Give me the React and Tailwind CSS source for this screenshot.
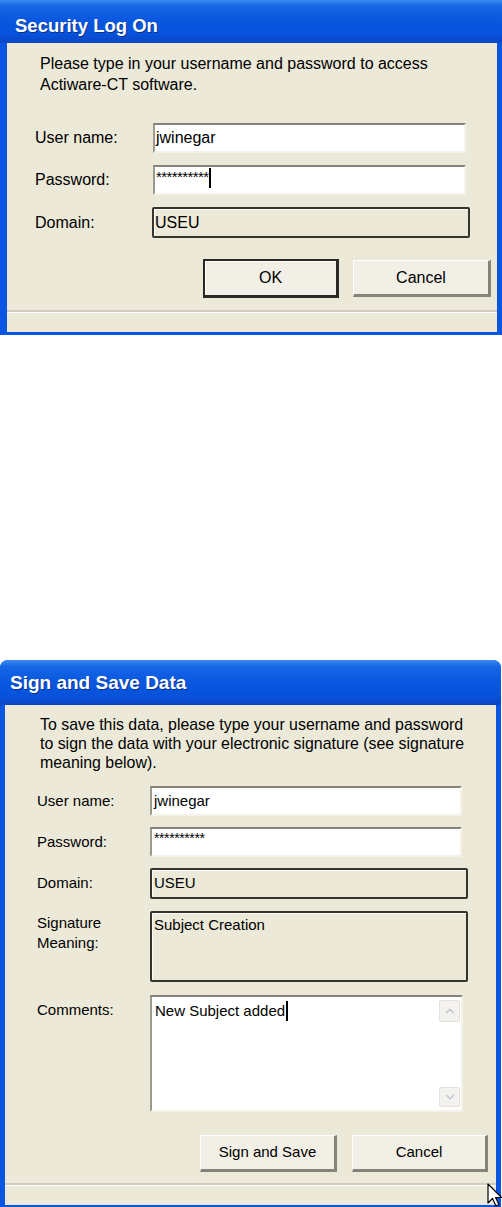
import { ChevronUp, ChevronDown } from "lucide-react";

const font = { fontFamily: '"Liberation Sans", Arial, sans-serif' };

const TitleBar = ({ title, className }) => (
  <div
    className={`flex items-center bg-[linear-gradient(180deg,#3A8BF2_0%,#1767E6_14%,#0A58E0_45%,#0752DA_80%,#0A45C4_100%)] ${className}`}
  >
    <span className="font-bold text-white [text-shadow:1px_1px_0_#0B2F8A]">{title}</span>
  </div>
);

const TextInput = ({ children, className = "" }) => (
  <div
    className={`flex border-2 border-t-[#85827A] border-l-[#9C998E] border-r-[#F4F2EA] border-b-[#F4F2EA] bg-white ${className}`}
  >
    {children}
  </div>
);

const ReadOnlyBox = ({ children, className = "" }) => (
  <div
    className={`rounded-[2px] border-2 border-[#35342F] bg-[#ECE9D8] shadow-[inset_1px_1px_0_#FBFAF5] ${className}`}
  >
    {children}
  </div>
);

const Button = ({ label, primary, className = "" }) => (
  <div
    className={`flex items-center justify-center bg-[#F1EFE6] ${
      primary
        ? "border-2 border-[#2A2925] border-r-[3px] border-b-[3px] shadow-[inset_1px_1px_0_#fff]"
        : "border-t border-l border-t-[#FFFFFF] border-l-[#FFFFFF] border-r-[3px] border-b-[3px] border-r-[#86837A] border-b-[#86837A]"
    } ${className}`}
  >
    {label}
  </div>
);

const Caret = ({ h = "h-[18px]" }) => <span className={`ml-[1px] inline-block w-[2px] ${h} bg-black`} />;

const StatusBar = ({ h }) => (
  <div className={`mt-auto border-t-2 border-t-[#CFCBBE] shadow-[inset_0_1px_0_#fff] ${h}`} />
);

const SecurityLogOn = () => (
  <div className="flex h-[335px] w-[502px] flex-col bg-[#0A56E2]">
    <TitleBar title="Security Log On" className="h-[43px] pl-[15px] pt-[8px] text-[18.5px]" />
    <div className="ml-[7px] mr-[5px] mb-[3px] flex flex-1 flex-col bg-[#ECE9D8] text-[16px] text-black">
      <p className="pl-[33px] pt-[10px] leading-[21px]">
        Please type in your username and password to access
        <br />
        Actiware-CT software.
      </p>
      <div className="mt-[28px] flex flex-col gap-[12px] pl-[28px]">
        <div className="flex items-center">
          <span className="w-[118px]">User name:</span>
          <TextInput className="h-[30px] w-[313px] items-center pl-[1px]">jwinegar</TextInput>
        </div>
        <div className="flex items-center">
          <span className="w-[118px]">Password:</span>
          <TextInput className="h-[30px] w-[313px] items-start pl-[1px] pt-[1px]">
            <span className="text-[15px] leading-[17px] tracking-[-0.6px]">**********</span>
            <Caret h="h-[20px]" />
          </TextInput>
        </div>
        <div className="flex items-center">
          <span className="w-[117px]">Domain:</span>
          <ReadOnlyBox className="flex h-[31px] w-[318px] items-center pl-[1px]">USEU</ReadOnlyBox>
        </div>
      </div>
      <div className="mt-[21px] flex justify-end gap-[14px] pr-[6px]">
        <Button label="OK" primary className="h-[39px] w-[136px]" />
        <Button label="Cancel" className="mt-[1px] h-[37px] w-[138px]" />
      </div>
      <StatusBar h="h-[22px]" />
    </div>
  </div>
);

const SignAndSave = () => (
  <div className="mt-[325px] flex h-[547px] w-[501px] flex-col rounded-t-[8px] bg-[#0A56E2]">
    <TitleBar title="Sign and Save Data" className="h-[45px] rounded-t-[8px] pl-[10px] pt-[1px] text-[19px]" />
    <div className="mx-[5px] mb-[2px] flex flex-1 flex-col bg-[#ECE9D8] text-[15px] text-black">
      <p className="whitespace-nowrap pl-[35px] pt-[10px] text-[15.9px] leading-[19px]">
        To save this data, please type your username and password
        <br />
        to sign the data with your electronic signature (see signature
        <br />
        meaning below).
      </p>
      <div className="mt-[14px] flex flex-col pl-[32px]">
        <div className="flex items-start">
          <span className="w-[113px] pt-[4px]">User name:</span>
          <TextInput className="h-[30px] w-[312px] items-center pl-[2px]">jwinegar</TextInput>
        </div>
        <div className="mt-[11px] flex items-start">
          <span className="w-[113px] pt-[4px]">Password:</span>
          <TextInput className="h-[30px] w-[312px] items-start pl-[2px] pt-[1px]">
            <span className="text-[14px] leading-[16px] tracking-[-0.4px]">**********</span>
          </TextInput>
        </div>
        <div className="mt-[11px] flex items-start">
          <span className="w-[113px] pt-[4px]">Domain:</span>
          <ReadOnlyBox className="flex h-[31px] w-[318px] items-center pl-[2px]">USEU</ReadOnlyBox>
        </div>
        <div className="mt-[12px] flex items-start">
          <span className="w-[113px] pt-[2px] leading-[20px]">
            Signature
            <br />
            Meaning:
          </span>
          <ReadOnlyBox className="h-[71px] w-[318px] pl-[2px] pt-[2px] leading-[20px]">
            Subject Creation
          </ReadOnlyBox>
        </div>
        <div className="mt-[13px] flex items-start">
          <span className="w-[113px] pt-[5px] leading-[20px]">Comments:</span>
          <TextInput className="h-[117px] w-[313px] items-stretch">
            <div className="flex flex-1 items-start pl-[3px] pt-[4px] leading-[20px]">
              New Subject added
              <Caret h="h-[20px]" />
            </div>
            <div className="flex w-[22px] flex-col justify-between py-[3px] pr-[1px]">
              <div className="flex h-[22px] items-center justify-center rounded-[2px] border border-[#E4E2DA] bg-[#F3F2EE]">
                <ChevronUp size={14} strokeWidth={2.5} className="text-[#C0C6D2]" />
              </div>
              <div className="flex h-[20px] items-center justify-center rounded-[2px] border border-[#E4E2DA] bg-[#F3F2EE]">
                <ChevronDown size={14} strokeWidth={2.5} className="text-[#C0C6D2]" />
              </div>
            </div>
          </TextInput>
        </div>
      </div>
      <div className="mt-[23px] flex justify-end gap-[15px] pr-[8px]">
        <Button label="Sign and Save" className="h-[37px] w-[137px]" />
        <Button label="Cancel" className="h-[37px] w-[136px]" />
      </div>
      <StatusBar h="h-[22px]" />
    </div>
  </div>
);

export default function App() {
  return (
    <div className="relative h-[1207px] w-[502px] overflow-hidden bg-white" style={font}>
      <SecurityLogOn />
      <SignAndSave />
      <svg
        className="absolute left-[487px] top-[1183px]"
        width="16"
        height="26"
        viewBox="0 0 16 26"
      >
        <path d="M1 1 L1 20 L5.5 15.5 L9 23 L12 21.5 L8.5 14.5 L14.5 14.5 Z" fill="#fff" stroke="#000" strokeWidth="1.2" strokeLinejoin="round" />
      </svg>
    </div>
  );
}
